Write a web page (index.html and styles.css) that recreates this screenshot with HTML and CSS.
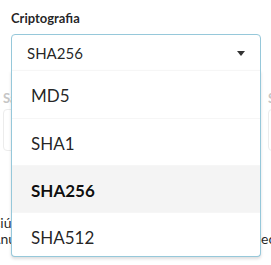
FILE: index.html
```html
<!DOCTYPE html>
<html lang="pt">
<head>
    <meta charset="UTF-8">
    <meta name="viewport" content="width=device-width, initial-scale=1.0">
    <title>Criptografia</title>
    <link rel="stylesheet" href="styles.css">
</head>
<body>
    <div class="form">
        <div class="field crypt">
            <label class="label">Criptografia</label>
            <div class="dropdown active">
                <span class="text">SHA256</span>
                <svg class="caret" width="8" height="5" viewBox="0 0 8 5">
                    <path d="M0 0 L8 0 L4 5 Z" fill="#333"/>
                </svg>
                <div class="menu">
                    <div class="item">MD5</div>
                    <div class="item">SHA1</div>
                    <div class="item selected">SHA256</div>
                    <div class="item">SHA512</div>
                </div>
            </div>
        </div>

        <div class="row">
            <div class="field disabled">
                <label class="label">Salt</label>
                <div class="input"></div>
            </div>
            <div class="field disabled">
                <label class="label">Senha</label>
                <div class="input"></div>
            </div>
        </div>

        <p class="note">
            <span class="line">Ciúmes não são necessários aqui</span>
            <span class="line split">
                <span class="start">Anúncios de segurança do</span>
                <span class="end">secreto</span>
            </span>
        </p>
    </div>
</body>
</html>
```

FILE: styles.css
```css
html, body {
    margin: 0;
    background: #fff;
    overflow: hidden;
}

body {
    font-family: Lato, "Noto Sans", sans-serif;
    color: rgba(0, 0, 0, .87);
    width: 271px;
    height: 265px;
}

.form {
    padding-top: 10px;
}

.label {
    display: block;
    font-size: 13px;
    font-weight: bold;
    line-height: 16px;
    margin-bottom: 8px;
}

.crypt {
    margin-left: 11px;
    width: 250px;
    position: relative;
    z-index: 2;
}

.dropdown {
    position: relative;
    box-sizing: border-box;
    height: 37px;
    border: 1px solid #96c8da;
    border-radius: 4px 4px 0 0;
    display: flex;
    align-items: center;
    justify-content: space-between;
    padding: 0 15px 0 15px;
    background: #fff;
}

.dropdown .text {
    font-size: 15px;
    line-height: 18px;
}

.caret {
    display: block;
    margin-top: 1px;
}

.menu {
    position: absolute;
    top: 100%;
    left: -1px;
    right: -1px;
    max-height: 186px;
    overflow: hidden;
    background: #fff;
    border: 1px solid #96c8da;
    border-top: none;
    border-radius: 0 0 4px 4px;
    box-shadow: 0 2px 3px 0 rgba(34, 36, 38, .15);
}

.item {
    box-sizing: border-box;
    height: 47px;
    border-top: 1px solid #f6f6f6;
    padding: 2px 19px 0 19px;
    display: flex;
    align-items: center;
    font-size: 17px;
    line-height: 17px;
}

.item:first-child {
    height: 48px;
}

.item.selected {
    background: #f4f4f4;
    font-weight: bold;
    color: rgba(0, 0, 0, .95);
}

.row {
    display: flex;
    gap: 12px;
    margin-left: 3px;
    margin-top: 19px;
}

.row .field {
    flex: none;
    width: 253px;
}

.row .label {
    margin-bottom: 3px;
}

.disabled .label {
    color: #c6c6c6;
}

.input {
    box-sizing: border-box;
    height: 42px;
    border: 1px solid #ececec;
    border-radius: 4px;
}

.note {
    margin: 64px 0 0 -9px;
    font-size: 14px;
    line-height: 16px;
    white-space: nowrap;
    overflow: hidden;
}

.note .line {
    display: block;
}

.note .split {
    display: grid;
    grid-template-columns: 264px auto;
}

.split .start {
    overflow: hidden;
}
```
